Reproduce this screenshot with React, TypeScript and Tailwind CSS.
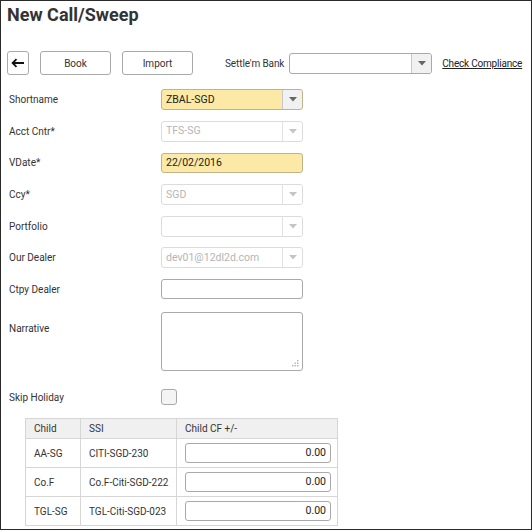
import React from "react";

const font = { fontFamily: "Roboto, 'Noto Sans', sans-serif" };

function Caret({ light = false }: { light?: boolean }) {
  return (
    <svg width="8" height="5" viewBox="0 0 8 5">
      <path d="M0 0 L8 0 L4 4.5 Z" fill={light ? "#c4c4c4" : "#666"} />
    </svg>
  );
}

function Select({
  value,
  yellow = false,
  disabled = false,
  width = "w-[142px]",
}: {
  value?: string;
  yellow?: boolean;
  disabled?: boolean;
  width?: string;
}) {
  const bg = yellow ? "bg-[#fde9a6]" : "bg-white";
  const border = disabled
    ? "border-[#dcdcdc]"
    : yellow
    ? "border-[#bfb38a]"
    : "border-[#a9a9a9]";
  return (
    <div className={`flex h-[21px] ${width} rounded-[3px] border ${border} ${bg}`}>
      <div
        className={`flex flex-1 items-center pl-[4px] text-[10.5px] ${
          disabled ? "text-[#b5b5b5]" : "text-[#222]"
        }`}
      >
        {value}
      </div>
      <div
        className={`flex w-[20px] items-center justify-center border-l ${
          disabled ? "border-[#e2e2e2] bg-white" : "border-[#c8c8c8] bg-[#f1f1f1]"
        } rounded-r-[3px]`}
      >
        <Caret light={disabled} />
      </div>
    </div>
  );
}

function TextBox({ value, yellow = false }: { value?: string; yellow?: boolean }) {
  return (
    <div
      className={`flex h-[20px] w-[142px] items-center rounded-[3px] border pl-[4px] text-[10.5px] text-[#222] ${
        yellow ? "border-[#bfb38a] bg-[#fde9a6]" : "border-[#a9a9a9] bg-white"
      }`}
    >
      {value}
    </div>
  );
}

function Row({ label, children }: { label: string; children: React.ReactNode }) {
  return (
    <div className="flex h-[21px] items-center">
      <div className="w-[152px] text-[10px] text-[#333]">{label}</div>
      {children}
    </div>
  );
}

const rows = [
  { child: "AA-SG", ssi: "CITI-SGD-230" },
  { child: "Co.F", ssi: "Co.F-Citi-SGD-222" },
  { child: "TGL-SG", ssi: "TGL-Citi-SGD-023" },
];

export default function App() {
  return (
    <div style={font} className="h-[530px] w-[532px] overflow-hidden border border-[#2a2a2a] bg-white">
      <h1 className="ml-[6px] mt-[3px] text-[18px] font-bold leading-[22px] text-[#333]">
        New Call/Sweep
      </h1>

      {/* toolbar */}
      <div className="ml-[6px] mt-[25px] flex items-center text-[10px] text-[#333]">
        <button className="flex h-[24px] w-[22px] items-center justify-center rounded-[3px] border border-[#a9a9a9] bg-white">
          <svg width="14" height="10" viewBox="0 0 14 10">
            <path d="M13 5 H2 M5.5 1.2 L1.6 5 L5.5 8.8" stroke="#111" strokeWidth="1.8" fill="none" />
          </svg>
        </button>
        <button className="ml-[11px] h-[24px] w-[71px] rounded-[3px] border border-[#a9a9a9] bg-white">
          Book
        </button>
        <button className="ml-[11px] h-[24px] w-[71px] rounded-[3px] border border-[#a9a9a9] bg-white">
          Import
        </button>
        <span className="ml-[32px] tracking-[-0.1px]">Settle'm Bank</span>
        <div className="ml-[5px]">
          <Select width="w-[143px]" />
        </div>
        <a className="ml-[10px] text-[10px] tracking-[-0.2px] text-[#222] underline">Check Compliance</a>
      </div>

      {/* form */}
      <div className="ml-[8px] mt-[14px] flex flex-col gap-[10.67px]">
        <Row label="Shortname">
          <Select value="ZBAL-SGD" yellow />
        </Row>
        <Row label="Acct Cntr*">
          <Select value="TFS-SG" disabled />
        </Row>
        <Row label="VDate*">
          <TextBox value="22/02/2016" yellow />
        </Row>
        <Row label="Ccy*">
          <Select value="SGD" disabled />
        </Row>
        <Row label="Portfolio">
          <Select disabled />
        </Row>
        <Row label="Our Dealer">
          <Select value="dev01@12dl2d.com" disabled />
        </Row>
        <Row label="Ctpy Dealer">
          <TextBox />
        </Row>
        <div className="mt-[1px] flex">
          <div className="w-[152px] pt-[9px] text-[10px] text-[#333]">Narrative</div>
          <div className="relative h-[59px] w-[142px] rounded-[3px] border border-[#a9a9a9]">
            <svg className="absolute bottom-[3px] right-[3px]" width="7" height="7" viewBox="0 0 7 7">
              <g fill="#b0b0b0">
                <rect x="5" y="0" width="1.4" height="1.4" />
                <rect x="2.5" y="2.5" width="1.4" height="1.4" />
                <rect x="5" y="2.5" width="1.4" height="1.4" />
                <rect x="0" y="5" width="1.4" height="1.4" />
                <rect x="2.5" y="5" width="1.4" height="1.4" />
                <rect x="5" y="5" width="1.4" height="1.4" />
              </g>
            </svg>
          </div>
        </div>
        <div className="mt-[8px] flex h-[16px] items-center">
          <div className="w-[152px] text-[10px] text-[#333]">Skip Holiday</div>
          <div className="h-[16px] w-[16px] rounded-[3px] border border-[#a9a9a9] bg-[#f4f4f4]" />
        </div>
      </div>

      {/* table */}
      <table className="ml-[24px] mt-[13px] border-collapse text-[10px] text-[#333]">
        <thead>
          <tr className="h-[20px] bg-[#f0f0f0]">
            <th className="w-[55px] border border-[#d6d6d6] pl-[8px] text-left font-normal">Child</th>
            <th className="w-[96px] border border-[#d6d6d6] pl-[8px] text-left font-normal">SSI</th>
            <th className="w-[161px] border border-[#d6d6d6] pl-[8px] text-left font-normal">Child CF +/-</th>
          </tr>
        </thead>
        <tbody>
          {rows.map((r) => (
            <tr key={r.child} className="h-[29px]">
              <td className="border border-[#d6d6d6] pl-[8px]">{r.child}</td>
              <td className="border border-[#d6d6d6] pl-[8px]">{r.ssi}</td>
              <td className="border border-[#d6d6d6] pl-[8px]">
                <div className="flex h-[20px] w-[146px] items-center justify-end rounded-[3px] border border-[#a9a9a9] pr-[4px] text-[10.5px] text-[#222]">
                  0.00
                </div>
              </td>
            </tr>
          ))}
        </tbody>
      </table>
    </div>
  );
}
